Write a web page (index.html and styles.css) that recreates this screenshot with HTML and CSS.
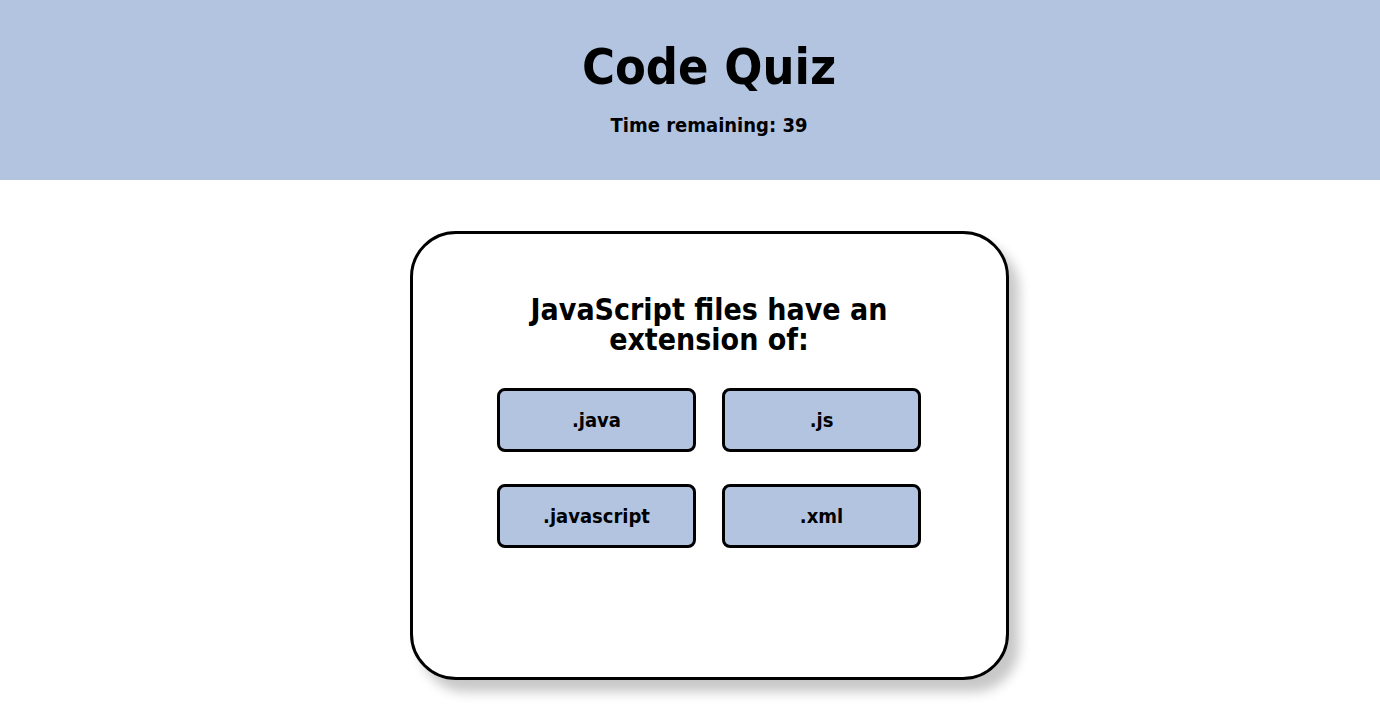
FILE: index.html
```html
<!DOCTYPE html>
<html lang="en">
<head>
    <meta charset="UTF-8">
    <meta name="viewport" content="width=device-width, initial-scale=1.0">
    <title>Code Quiz</title>
    <link rel="stylesheet" href="styles.css">
</head>
<body>
    <header class="top">
        <h1>Code Quiz</h1>
        <p class="timer">Time remaining: <span id="time">39</span></p>
    </header>
    <main>
        <div class="card">
            <h2 class="question">JavaScript files have an extension of:</h2>
            <div class="choices">
                <button class="choice">.java</button>
                <button class="choice">.js</button>
                <button class="choice">.javascript</button>
                <button class="choice">.xml</button>
            </div>
        </div>
    </main>
</body>
</html>
```

FILE: styles.css
```css
body {
    margin: 0;
    font-family: "DejaVu Sans Condensed", "DejaVu Sans", Verdana, sans-serif;
    font-weight: bold;
    color: #000;
    background-color: #fff;
}

.top {
    height: 180px;
    background-color: #b3c4e0;
    text-align: center;
    padding: 40px 0 0 38px;
    box-sizing: border-box;
}

.top h1 {
    margin: 0;
    font-size: 50px;
    line-height: 54px;
}

.timer {
    margin: 19px 0 0;
    font-size: 20px;
}

main {
    display: flex;
    justify-content: center;
    padding: 51px 0 40px 38px;
}

.card {
    width: 599px;
    height: 449px;
    border: 3px solid #000;
    border-radius: 46px;
    box-shadow: 10px 12px 12px rgba(0, 0, 0, 0.22);
    display: flex;
    flex-direction: column;
    align-items: center;
    padding-top: 61px;
    box-sizing: border-box;
}

.question {
    margin: 0;
    width: 390px;
    text-align: center;
    font-size: 30px;
    line-height: 30px;
}

.choices {
    margin-top: 33px;
    display: grid;
    grid-template-columns: 199px 199px;
    column-gap: 26px;
    row-gap: 32px;
}

.choice {
    height: 64px;
    background-color: #b3c4e0;
    border: 3px solid #000;
    border-radius: 8px;
    font-family: inherit;
    font-weight: bold;
    font-size: 20px;
    color: #000;
    cursor: pointer;
}
```
